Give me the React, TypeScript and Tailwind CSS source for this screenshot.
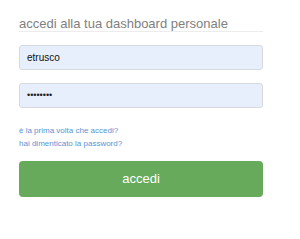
import React from "react";

export default function App() {
  return (
    <div
      className="w-[300px] h-[239px] bg-white pl-[19px] pt-[16px]"
      style={{ fontFamily: '"Liberation Sans", Arial, sans-serif' }}
    >
      <div className="w-[244px]">
        <div className="text-[13px] leading-[15px] text-[#808080] border-b border-[#ececec]">
          accedi alla tua dashboard personale
        </div>
        <div className="mt-[13px] h-[25px] rounded-[3px] border border-[#d6d9de] bg-[#e8effc] flex items-center pl-[7px] text-[10px] text-[#111]">
          etrusco
        </div>
        <div className="mt-[13px] h-[25px] rounded-[3px] border border-[#d6d9de] bg-[#e8effc] flex items-center pl-[7px] text-[9px] text-[#222]">
          ••••••••
        </div>
        <div className="mt-[16px] text-[8px] leading-[13px] text-[#5b93d3]">
          <div>è la prima volta che accedi?</div>
          <div>hai dimenticato la password?</div>
        </div>
        <div className="mt-[11px] h-[36px] rounded-[4px] bg-[#67aa5b] flex items-center justify-center text-white text-[13px]">
          accedi
        </div>
      </div>
    </div>
  );
}
